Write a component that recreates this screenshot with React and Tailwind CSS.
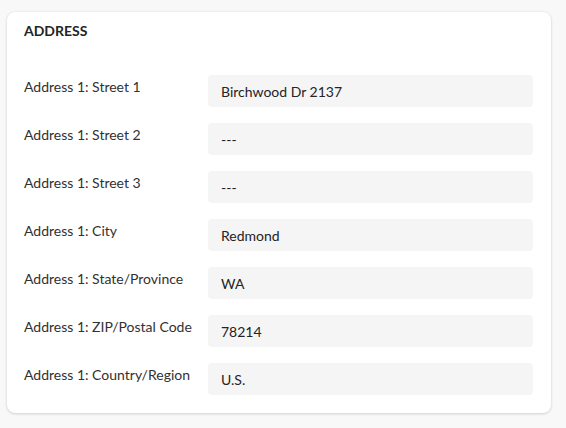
export default function App() {
  const rows = [
    ["Address 1: Street 1", "Birchwood Dr 2137"],
    ["Address 1: Street 2", "---"],
    ["Address 1: Street 3", "---"],
    ["Address 1: City", "Redmond"],
    ["Address 1: State/Province", "WA"],
    ["Address 1: ZIP/Postal Code", "78214"],
    ["Address 1: Country/Region", "U.S."],
  ];
  return (
    <div
      className="w-[566px] h-[428px] bg-[#f8f8f8] pt-[12px] pl-[7px]"
      style={{ fontFamily: 'Lato, "Noto Sans", sans-serif' }}
    >
      <div className="w-[544px] h-[401px] bg-white rounded-[8px] shadow-[0_1px_3px_rgba(0,0,0,0.14),0_0_2px_rgba(0,0,0,0.08)] px-[17px] pt-[10px]">
        <div className="h-[17px] text-[14px] leading-[17px] font-bold text-[#242424]">ADDRESS</div>
        <div className="mt-[36px] flex flex-col gap-[16px]">
          {rows.map(([label, value]) => (
            <div key={label} className="flex">
              <div className="w-[184px] pt-[3px] text-[14px] leading-[18px] text-[#323130]">{label}</div>
              <div className="w-[325px] h-[32px] rounded-[4px] bg-[#f5f5f5] flex items-center px-[13px] pt-[1px] text-[14px] text-[#242424]">
                {value}
              </div>
            </div>
          ))}
        </div>
      </div>
    </div>
  );
}
